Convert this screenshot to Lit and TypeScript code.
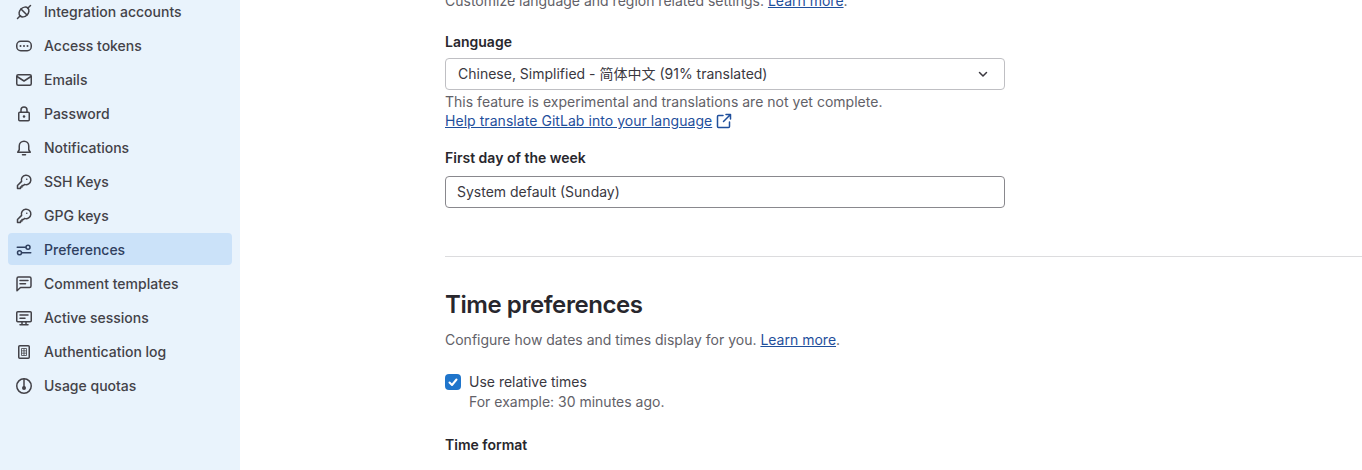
import { LitElement, html, css, svg } from "lit";
import { customElement } from "lit/decorators.js";

const key = svg`<path d="M5.600 7.400A4.750 4.750 0 1 1 8.600 10.400L7.500 11.500H6V13H4.500V14.500H1.500V11.500Z"/><circle class="dot" cx="10.750" cy="5.250" r="0.800"/>`;
const items: [string, any][] = [
  ["Integration accounts", svg`<ellipse cx="8" cy="8" rx="5.500" ry="4.250" transform="rotate(-45 8 8)"/><path d="M1.500 14.500L4.250 11.750M14.500 1.500L11.750 4.250M5 5L11 11"/>`],
  ["Access tokens", svg`<rect x="0.750" y="3.250" width="14.500" height="9.500" rx="4"/><circle class="dot" cx="4.500" cy="8" r="1"/><circle class="dot" cx="8" cy="8" r="1"/><circle class="dot" cx="11.500" cy="8" r="1"/>`],
  ["Emails", svg`<rect x="0.750" y="2.750" width="14.500" height="10.500" rx="1.500"/><path d="M1 4.500l7 4.500 7-4.500"/>`],
  ["Password", svg`<rect x="2.750" y="6.250" width="10.500" height="8.500" rx="1"/><path d="M5 6V4a3 3 0 016 0v2"/><circle class="dot" cx="8" cy="10.500" r="1.250"/>`],
  ["Notifications", svg`<path d="M1.750 12.250h12.500l-1.500-2.500V6a4.750 4.750 0 00-9.500 0v3.750zM6.500 14.750h3"/>`],
  ["SSH Keys", key],
  ["GPG keys", key],
  ["Preferences", svg`<circle cx="3.500" cy="10.750" r="2"/><circle cx="12" cy="5.250" r="2"/><path d="M1.250 5.250H9.500M5.750 10.750h9"/>`],
  ["Comment templates", svg`<path d="M1 2.500A1.500 1.500 0 012.500 1h11A1.500 1.500 0 0115 2.500v7.500a1.500 1.500 0 01-1.500 1.500H4.500L1 14.750zM4 4.500h8M4 7.750h5.500"/>`],
  ["Active sessions", svg`<rect x="0.750" y="1.750" width="14.500" height="10" rx="1"/><path d="M4 14.750h8M6 11.750v3M10 11.750v3M4 5h8M4 8.250h5"/>`],
  ["Authentication log", svg`<rect x="2.750" y="1.750" width="10.500" height="12.500" rx="1"/><path class="thin" d="M5.500 4.500h5v7h-5zM5.500 6.830h5M5.500 9.170h5M8 4.500v7"/>`],
  ["Usage quotas", svg`<circle cx="8" cy="8" r="7.250"/><path d="M8 1v8"/><circle class="dot" cx="8" cy="10" r="2"/>`],
];

@customElement("app-root")
export class AppRoot extends LitElement {
  static styles = css`
    :host { display: block; height: 470px; overflow: hidden; font-family: Inter, "Noto Sans CJK SC", sans-serif; font-size: 14px; color: #3a383f; line-height: 20px; background: #fff; }
    .page { display: flex; height: 470px; overflow: hidden; }
    .side { width: 240px; flex: none; background: #e9f3fc; box-sizing: border-box; padding: 0 8px; height: 470px; }
    .nav { display: flex; flex-direction: column; gap: 2px; margin-top: -5px; }
    .item { box-sizing: border-box; display: flex; align-items: center; gap: 12px; height: 32px; padding: 2px 8px 0; border-radius: 4px; color: #434248; font-weight: 500; font-size: 14px; }
    .item.on { background: #cbe2f9; color: #2f3f5f; }
    .item svg { width: 16px; height: 16px; flex: none; fill: none; stroke: currentColor; stroke-width: 1.5; stroke-linecap: round; stroke-linejoin: round; }
    .item svg .dot { fill: currentColor; stroke: none; }
    .item svg .thin { stroke-width: 0.800; stroke-linecap: butt; }
    .main { flex: 1; min-width: 0; padding-left: 205px; margin-top: -9px; }
    .form { width: 560px; }
    .muted { color: #626168; }
    a { color: #1f4f9c; text-decoration: underline; }
    label.lbl { display: block; font-weight: 600; color: #28272d; }
    .intro { margin: 0; height: 20px; }
    .f1 { margin-top: 21px; }
    .ctl { box-sizing: border-box; height: 32px; margin-top: 6px; border-radius: 4px; background: #fff; display: flex; align-items: center; justify-content: space-between; }
    .sel { border: 1px solid #bfbfc3; padding: 0 16px 0 12px; color: #3a383f; }
    .sel svg { width: 10px; height: 10px; fill: none; stroke: #3a383f; stroke-width: 1.500; stroke-linecap: round; stroke-linejoin: round; }
    .inp { border: 1px solid #89888d; padding: 0 11px; color: #3a383f; margin-top: 8px; }
    .help { margin-top: 2px; line-height: 19px; letter-spacing: 0.015px; }
    .help a { display: inline-flex; align-items: center; gap: 4px; letter-spacing: 0.05px; }
    .help svg { width: 16px; height: 16px; fill: none; stroke: #1f4f9c; stroke-width: 1.500; stroke-linecap: round; stroke-linejoin: round; }
    .f2 { margin-top: 18px; }
    hr { border: 0; border-top: 1px solid #dcdcde; margin: 48px 0 0; }
    h2 { margin: 32px 0 0; font-size: 24px; line-height: 32px; font-weight: 600; color: #28272d; letter-spacing: -0.42px; }
    .desc { margin: 9px 0 0; }
    .chk { display: flex; gap: 8px; margin-top: 22px; }
    .box { width: 16px; height: 16px; margin-top: 2px; background: #1f75cb; border-radius: 4px; flex: none; display: flex; align-items: center; justify-content: center; }
    .box svg { width: 12px; height: 12px; fill: none; stroke: #fff; stroke-width: 2; stroke-linecap: round; stroke-linejoin: round; }
    .tf { margin-top: 23px; }
  `;
  render() {
    return html`<div class="page">
      <aside class="side"><nav class="nav">
        ${items.map(([t, i]) => html`<div class="item ${t === "Preferences" ? "on" : ""}"><svg viewBox="0 0 16 16">${i}</svg><span>${t}</span></div>`)}
      </nav></aside>
      <main class="main">
        <div class="form">
          <p class="intro muted">Customize language and region related settings. <a>Learn more</a>.</p>
          <div class="f1">
            <label class="lbl">Language</label>
            <div class="ctl sel"><span>Chinese, Simplified - 简体中文 (91% translated)</span><svg viewBox="0 0 10 10"><path d="M1.500 3.500L5 7l3.500-3.500"/></svg></div>
            <div class="help muted">This feature is experimental and translations are not yet complete.<br>
              <a>Help translate GitLab into your language <svg viewBox="0 0 16 16"><path d="M7 2.500H2.500a1 1 0 00-1 1v10a1 1 0 001 1h10a1 1 0 001-1V9M10 1.500h4.500V6M14.500 1.500L7.500 8.500"/></svg></a></div>
          </div>
          <div class="f2">
            <label class="lbl">First day of the week</label>
            <div class="ctl inp">System default (Sunday)</div>
          </div>
        </div>
        <hr>
        <h2>Time preferences</h2>
        <p class="desc muted">Configure how dates and times display for you. <a>Learn more</a>.</p>
        <div class="chk"><span class="box"><svg viewBox="0 0 12 12"><path d="M2.500 6.500L5 9l4.500-5.500"/></svg></span>
          <div><div>Use relative times</div><div class="muted">For example: 30 minutes ago.</div></div></div>
        <label class="lbl tf">Time format</label>
      </main>
    </div>`;
  }
}
